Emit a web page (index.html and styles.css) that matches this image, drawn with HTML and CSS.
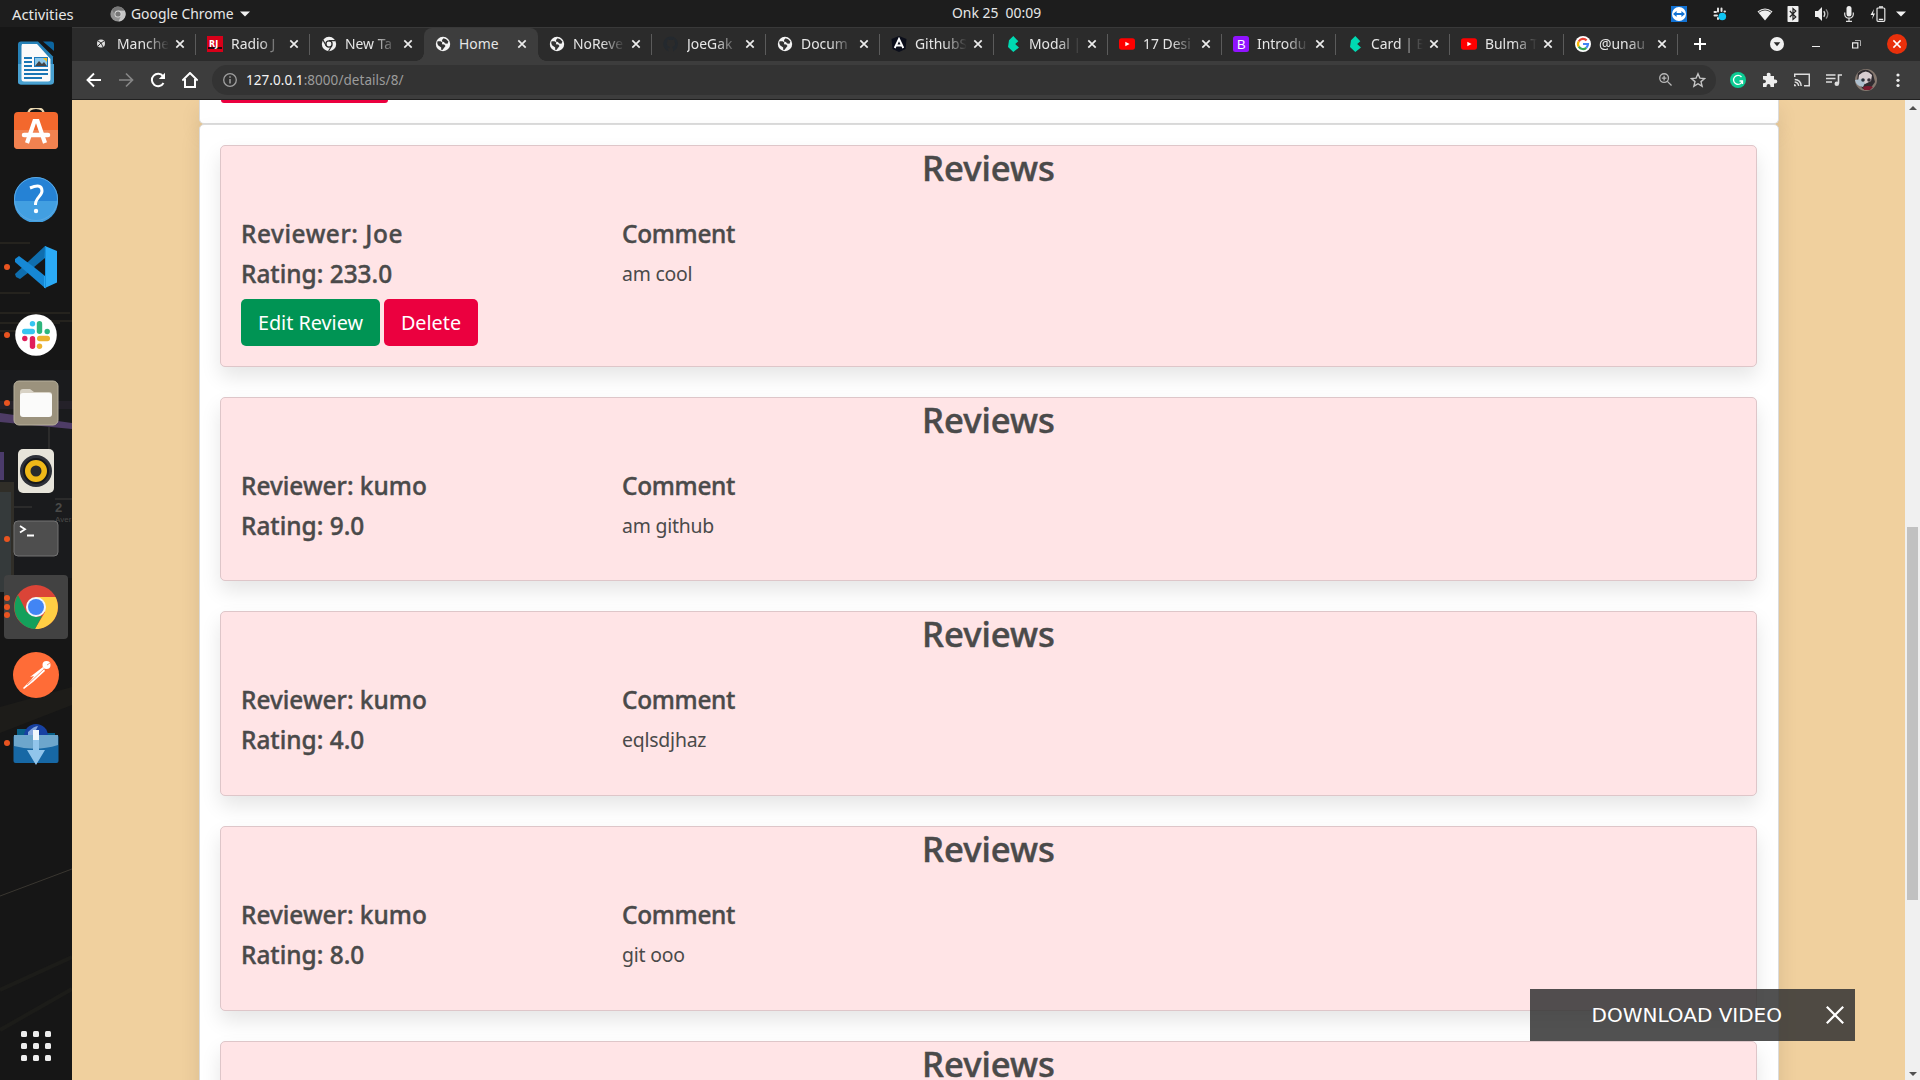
FILE: index.html
```html
<!DOCTYPE html>
<html lang="en">
<head>
<meta charset="utf-8">
<title>Home</title>
<link rel="stylesheet" href="styles.css">
</head>
<body>
<svg class="sprites" aria-hidden="true">
  <symbol id="globe" viewBox="0 0 16 16"><circle cx="8" cy="8" r="7.200" fill="#f4f4f4"/><path d="M2.600 5.200l3 .1 1.700 1.300-.4 1.600 2.400.2 1.200 1.500-1.600 2.200-1.500 1.900-1.300-.2.1-2.300L3 9.200 2.200 7zM8.600 2.300l2.600.9 2.200 2.400-.9 2.100-2.300-.3-1.300-1.500-2-.4.3-1.700z" fill="#343434"/></symbol>
  <symbol id="chromium" viewBox="0 0 16 16"><circle cx="8" cy="8" r="7.200" fill="#f1f1f1"/><circle cx="8" cy="8" r="3.100" fill="#f1f1f1" stroke="#2b2b2b" stroke-width="1.300"/><path d="M8 4.700h6.500M5.200 9.700L2 4M10.800 9.700L7.600 15" stroke="#2b2b2b" stroke-width="1.200"/></symbol>
  <symbol id="bulma" viewBox="0 0 16 16"><path d="M3 11l1-6.800L8.300 0l5 5.200L10.200 8l3.800 3.600L8.300 16z" fill="#00d9b2"/></symbol>
  <symbol id="youtube" viewBox="0 0 16 16"><rect y="2.300" width="16" height="11.400" rx="2.600" fill="#f00"/><path d="M6.300 5.700L10.600 8l-4.300 2.300z" fill="#fff"/></symbol>
  <symbol id="close" viewBox="0 0 10 10"><path d="M1.300 1.300l7.400 7.400M8.700 1.300L1.300 8.700" stroke="#ececec" stroke-width="1.700" fill="none"/></symbol>
  <symbol id="slack" viewBox="0 0 28 28"><g stroke-width="5.400" stroke-linecap="round"><path d="M2.700 10.500h7.600" stroke="#36c5f0"/><path d="M10.500 2.800v.01" stroke="#36c5f0"/><path d="M17.500 2.700v7.600" stroke="#2eb67d"/><path d="M25.200 10.500h.01" stroke="#2eb67d"/><path d="M17.700 17.500h7.600" stroke="#ecb22e"/><path d="M17.500 25.200h.01" stroke="#ecb22e"/><path d="M10.500 17.700v7.600" stroke="#e01e5a"/><path d="M2.800 17.500h.01" stroke="#e01e5a"/></g></symbol>
</svg>

<header class="topbar">
  <div class="topbar-left">
    <span class="activities">Activities</span>
    <svg class="app-icon" viewBox="0 0 16 16"><circle cx="8" cy="8" r="7.600" fill="#929292"/><path d="M8 4.500h6.800A7.600 7.600 0 0 1 8.500 15.600L11 9.800z" fill="#c6c6c6"/><path d="M2 3.500A7.600 7.600 0 0 1 14.600 4.500H8L5 9z" fill="#777"/><circle cx="8" cy="8" r="3.500" fill="#ddd"/><circle cx="8" cy="8" r="2.600" fill="#777"/></svg>
    <span class="app-name">Google Chrome</span>
    <svg class="caret" viewBox="0 0 10 6"><path d="M0 .5h10L5 5.500z" fill="#f2f2f2"/></svg>
  </div>
  <span class="clock">Onk 25&nbsp; 00:09</span>
  <div class="tray">
    <svg width="16" height="16" viewBox="0 0 16 16"><rect width="16" height="16" fill="#1272d3"/><circle cx="8" cy="8" r="7" fill="#fff"/><path d="M2 8l3.600-3v2h4.800V5L14 8l-3.600 3V9H5.600v2z" fill="#1272d3"/></svg>
    <svg class="tray-slack" width="16" height="16" viewBox="0 0 16 16"><path d="M6 2.500v3M2.500 6H4M9.500 2.500V5M12.500 5.500h.5M2.500 9.500H5M6 12v1" stroke="#e4e4e4" stroke-width="2" stroke-linecap="round"/><circle cx="10.300" cy="10.500" r="3.800" fill="#10c6f5"/></svg>
    <svg class="tray-wifi" width="16" height="16" viewBox="0 0 16 16"><path d="M.5 5.500Q8-.5 15.500 5.500L8 14.500z" fill="#eee"/><path d="M1.800 6.300Q8 1.700 14.200 6.300" stroke="#1d1d1d" stroke-width=".8" fill="none"/></svg>
    <svg width="12" height="16" viewBox="0 0 12 16"><rect x=".5" width="11" height="16" rx=".8" fill="#eee"/><path d="M2.800 5l6 6L6 13.500v-11L8.800 5l-6 6" fill="none" stroke="#222" stroke-width="1.200"/></svg>
    <svg class="tray-volume" width="16" height="16" viewBox="0 0 16 16"><path d="M1 5h3l4-4v14l-4-4H1z" fill="#eee"/><path d="M9.800 5.200q2 2.800 0 5.600" stroke="#ddd" stroke-width="1.300" fill="none"/><path d="M12 3.300q3.600 4.700 0 9.400" stroke="#888" stroke-width="1.300" fill="none"/></svg>
    <svg class="tray-mic" width="10" height="16" viewBox="0 0 10 16"><rect x="2.500" width="5" height="10.500" rx="2.500" fill="#eee"/><path d="M.7 6.500v2Q1 12 5 12.200 9 12 9.300 8.500v-2M5 12v3M2 15.300h6" stroke="#ddd" stroke-width="1.200" fill="none"/></svg>
    <svg class="tray-battery" width="16" height="16" viewBox="0 0 16 16"><path d="M4 3L.5 9H3l-1 4.500L5 7.500H3z" fill="#eee"/><rect x="7" y="2" width="7.800" height="13.300" rx="1" fill="none" stroke="#e5e5e5" stroke-width="1.200"/><path d="M9 1h4M8.800 13.300h4.400" stroke="#eee" stroke-width="1.300"/></svg>
    <svg class="caret" viewBox="0 0 10 6"><path d="M0 .5h10L5 5.500z" fill="#f2f2f2"/></svg>
  </div>
</header>

<div class="desktop">
  <nav class="dock">
    <svg class="wallpaper" viewBox="0 0 72 1053" preserveAspectRatio="none">
      <g fill="none"><path d="M0 216h30M0 266h30M0 286h70M0 296h60M35 294h37M0 304h20" stroke="#4b4432" stroke-opacity=".6"/><path d="M0 869l72-27" stroke="#3a3731"/><path d="M0 963l72-33M0 1003l72-41" stroke="#1c1c19" stroke-width="4"/></g>
      <path d="M0 343h72v208H0z" fill="#1a1b1d"/><path d="M0 374h72v8H0z" fill="#242129"/><path d="M0 386l72 10v6L0 395z" fill="#4e3c66"/><path d="M0 425h4v28H0z" fill="#4b3b6b"/><path d="M0 455h14v100H0z" fill="#302e28"/><path d="M0 465h11v100H0z" fill="#353a3b"/><path d="M49 400v50M14 480h18M55 472h17" stroke="#3c3c3b"/>
      <path d="M0 680l72-20v18L0 706z" fill="#1d1c19"/>
      <text x="55" y="485" class="wall-number">2</text><text x="55" y="495" class="wall-label">Aver</text>
    </svg>
    <a class="dock-item"><svg width="44" height="44" viewBox="0 0 44 44"><path d="M7 .5h17l15 15v25q0 3-3 3H7q-3 0-3-3v-37q0-3 3-3z" fill="#2681b7"/><path d="M4 23h36v17.500q0 3-3 3H7q-3 0-3-3z" fill="#49a1d1"/><path d="M29 .5h8q3 0 3 3V10z" fill="#0c659f"/><path d="M8 3h15l13.500 15v20q0 2.500-2.500 2.500H10Q7.500 40.500 7.500 38V5z" fill="#fafafa"/><path d="M10 17h8M10 21h8M10 25h8M10 29h24M10 33h24M10 37h18" stroke="#1976b5" stroke-width="2"/><rect x="20" y="16" width="14" height="10" fill="#1d7abd"/><path d="M21 17h12v8H21z" fill="#8bc7e8"/><path d="M21 25l4-5 3 3 2-2 3 4z" fill="#444"/><path d="M29 17h4v4z" fill="#f4bb1b"/></svg></a>
    <a class="dock-item"><svg width="46" height="46" viewBox="0 0 46 46"><path d="M15 7q0-7 8-7t8 7" stroke="#ead7b0" stroke-width="2" fill="none"/><rect x="1" y="4" width="44" height="37" rx="4" fill="#f3682d"/><path d="M1 22h44v15q0 4-4 4H5q-4 0-4-4z" fill="#f18250"/><path d="M14 35l7.500-22h3L32 35" stroke="#fff" stroke-width="4.200" fill="none"/><path d="M11 27h24" stroke="#fff" stroke-width="4.500" stroke-linecap="round"/></svg></a>
    <a class="dock-item"><svg width="46" height="46" viewBox="0 0 46 46"><circle cx="23" cy="23" r="22" fill="#2582d5"/><path d="M1 25h44a22 22 0 0 1-44 0z" fill="#429fe1"/><circle cx="23" cy="23" r="21.500" fill="none" stroke="#5ba9e3"/><path d="M17 12q12-5 12 3c0 5-7 7-6.500 14" stroke="#fff" stroke-width="3" fill="none"/><circle cx="23" cy="35" r="2.200" fill="#fff"/></svg></a>
    <a class="dock-item"><i class="dot"></i><svg width="44" height="44" viewBox="0 0 44 44"><path d="M31 1L1 29l1 3 4 2 26-20z" fill="#0f6eae"/><path d="M1 14l4-3 27 20-1 12L1 17z" fill="#1688d5"/><path d="M31 1l-1 42 2-.5 11-5V6z" fill="#2baaf5"/><path d="M31 1v13L20 22l11 9v12l1 .5V1z" fill="#1691df"/><path d="M31 13v18l-11-9z" fill="#151719"/></svg></a>
    <a class="dock-item"><i class="dot"></i><svg width="44" height="44" viewBox="0 0 44 44"><circle cx="22" cy="22" r="20.800" fill="#fff"/><use href="#slack" x="8" y="8" width="28" height="28"/></svg></a>
    <a class="dock-item"><i class="dot"></i><svg width="46" height="46" viewBox="0 0 46 46"><rect x="1" y="1" width="44" height="44" rx="5" fill="#9b927d" stroke="#b7b09d"/><path d="M7 12q0-3 3-3h7l4 3h15q3 0 3 3v18H7z" fill="#d8d2c5"/><rect x="7" y="13" width="32" height="24" rx="3" fill="#fbfbfa"/></svg></a>
    <a class="dock-item"><svg width="46" height="46" viewBox="0 0 46 46"><rect x="5" y="1" width="36" height="44" rx="5" fill="#e7e4da"/><circle cx="23" cy="23" r="16" fill="#2d3038"/><circle cx="23" cy="23" r="12" fill="#efb818" stroke="#17191d" stroke-width="2"/><circle cx="23" cy="23" r="5.500" fill="#292a2c"/></svg></a>
    <a class="dock-item"><i class="dot"></i><svg width="46" height="38" viewBox="0 0 46 38"><rect x="1" y="1" width="44" height="35" rx="4" fill="#4e4e4e" stroke="#737373"/><path d="M7 6l5 3.200-5 3.200M14 15.500h7" stroke="#fff" stroke-width="1.800" fill="none"/></svg></a>
    <a class="dock-item active"><span class="dots"><i></i><i></i><i></i></span><svg width="46" height="46" viewBox="0 0 46 46"><circle cx="23" cy="23" r="22" fill="#db4437"/><path d="M23 13h19.500A22 22 0 0 1 22 45L32 28z" fill="#ffce44"/><path d="M13.500 28l9.500 5 6-1-7 13A22 22 0 0 1 5 11z" fill="#14a05b"/><circle cx="23" cy="23" r="10" fill="#f1f5fb"/><circle cx="23" cy="23" r="8" fill="#4285f4"/></svg></a>
    <a class="dock-item"><svg width="48" height="48" viewBox="0 0 48 48"><circle cx="24" cy="24" r="23" fill="#ff6c37"/><circle cx="34.500" cy="14" r="4" fill="#fff"/><path d="M31 16L18 26l4-1-3 4-8 8 1 1 9-7 12-11z" fill="#fff"/><path d="M32 18L15 34M35 14l3-2" stroke="#ff6c37" stroke-width=".7"/></svg></a>
    <a class="dock-item downloader"><i class="dot"></i><svg width="46" height="42" viewBox="0 0 46 42"><path d="M4 5h9l3 4h26v12H4z" fill="#075f87"/><circle cx="23" cy="12" r="12" fill="#1741a2"/><path d="M15 8q6-6 10-6l-4 8 8 2-2 4-12-1z" fill="#87a9df"/><rect x=".5" y="11" width="45" height="28" rx="2" fill="#1768a5"/><path d="M1 11h44v10Q23 28 1 22z" fill="#6da6cc"/><path d="M20 6h6v20h6l-9 15-9-15h6z" fill="#91c5eb"/><path d="M20 6h6v10h-6z" fill="#f2f8fc"/></svg></a>
    <a class="apps"><i></i><i></i><i></i><i></i><i></i><i></i><i></i><i></i><i></i></a>
  </nav>

  <section class="browser">
    <div class="tabstrip">
      <div class="tab"><svg class="fav" viewBox="0 0 16 16"><circle cx="8" cy="7.500" r="4" fill="#ddd"/><path d="M5 5l3 2 3-2M5 10l3-3 2 4" stroke="#333" fill="none"/></svg><span class="label">Manche</span><svg class="x"><use href="#close"/></svg></div>
      <div class="tab"><svg class="fav" viewBox="0 0 16 16"><rect width="16" height="16" fill="#d80019"/><path d="M1 11h14v2H1z" fill="#24070b"/><text x="2" y="10.500" class="rj">RJ</text></svg><span class="label">Radio J</span><svg class="x"><use href="#close"/></svg></div>
      <div class="tab no-line"><svg class="fav"><use href="#chromium"/></svg><span class="label">New Ta</span><svg class="x"><use href="#close"/></svg></div>
      <div class="tab current"><svg class="fav"><use href="#globe"/></svg><span class="label">Home</span><svg class="x"><use href="#close"/></svg></div>
      <div class="tab"><svg class="fav"><use href="#globe"/></svg><span class="label">NoReve</span><svg class="x"><use href="#close"/></svg></div>
      <div class="tab"><svg class="fav" viewBox="0 0 16 16"><path d="M6 15.500C-1 13-1.500 5 4 1.500c8-4 15 6 8 12.500l-2 1.500v-3l-1-1.500c3-.5 4-3 2.500-5.500V3L9.500 4h-3l-2-1v2C3 8 4 10.500 7 11l-1 1.500-2-1" fill="#24292e"/></svg><span class="label">JoeGak</span><svg class="x"><use href="#close"/></svg></div>
      <div class="tab"><svg class="fav"><use href="#globe"/></svg><span class="label">Docum</span><svg class="x"><use href="#close"/></svg></div>
      <div class="tab"><svg class="fav" viewBox="0 0 16 16"><path d="M8 0l7.500 3-1 10L8 16l-6.500-3L.5 3z" fill="#0b0e1a"/><path d="M3.700 12L8 3l4.300 9M5.500 9.500h5" fill="none" stroke="#fff" stroke-width="1.900"/></svg><span class="label">GithubS</span><svg class="x"><use href="#close"/></svg></div>
      <div class="tab"><svg class="fav"><use href="#bulma"/></svg><span class="label">Modal |</span><svg class="x"><use href="#close"/></svg></div>
      <div class="tab"><svg class="fav"><use href="#youtube"/></svg><span class="label">17 Desi</span><svg class="x"><use href="#close"/></svg></div>
      <div class="tab"><svg class="fav" viewBox="0 0 16 16"><rect width="16" height="16" rx="2.500" fill="#9013fe"/><text x="4" y="13" class="bs">B</text></svg><span class="label">Introdu</span><svg class="x"><use href="#close"/></svg></div>
      <div class="tab"><svg class="fav"><use href="#bulma"/></svg><span class="label">Card | B</span><svg class="x"><use href="#close"/></svg></div>
      <div class="tab"><svg class="fav"><use href="#youtube"/></svg><span class="label">Bulma T</span><svg class="x"><use href="#close"/></svg></div>
      <div class="tab"><svg class="fav" viewBox="0 0 16 16"><circle cx="8" cy="8" r="8" fill="#fff"/><g fill="none" stroke-width="2.200"><path d="M11.600 4.400A5 5 0 0 0 3.800 5.300" stroke="#ea4335"/><path d="M3.800 5.300a5 5 0 0 0 0 5.400" stroke="#fbbc05"/><path d="M3.800 10.700A5 5 0 0 0 11.300 11.800" stroke="#34a853"/><path d="M11.300 11.800Q13 10 13 8H8" stroke="#4285f4"/></g></svg><span class="label">@unau</span><svg class="x"><use href="#close"/></svg></div>
      <svg class="new-tab" viewBox="0 0 12 12"><path d="M6 0v12M0 6h12" stroke="#fff" stroke-width="2"/></svg>
      <div class="window-controls">
        <svg width="14" height="14" viewBox="0 0 14 14"><circle cx="7" cy="7" r="7" fill="#f1f1f1"/><path d="M3.700 5.300h6.600L7 9.300z" fill="#292929"/></svg>
        <svg width="8" height="8" viewBox="0 0 8 8"><path d="M0 6.500h8" stroke="#eee"/></svg>
        <svg width="9" height="9" viewBox="0 0 9 9"><path d="M.6 2.800h5.200V8H.6z" stroke="#eee" stroke-width="1.200" fill="none"/><path d="M3 .5h5.500V6" stroke="#aaa" fill="none"/></svg>
        <svg width="20" height="20" viewBox="0 0 20 20"><circle cx="10" cy="10" r="10" fill="#e9300b"/><path d="M6.400 6.400l7.200 7.200M13.600 6.400l-7.200 7.200" stroke="#fff" stroke-width="1.500"/></svg>
      </div>
    </div>

    <div class="toolbar">
      <div class="nav-buttons">
        <svg viewBox="0 0 16 16"><path d="M15 8H2M8 1.500L1.500 8 8 14.500" stroke="#fff" stroke-width="1.900" fill="none"/></svg>
        <svg viewBox="0 0 16 16"><path d="M1 8h13M8 1.500L14.500 8 8 14.500" stroke="#868686" stroke-width="1.700" fill="none"/></svg>
        <svg viewBox="0 0 16 16"><path d="M13.500 11A6.200 6.200 0 1 1 13 4.200" stroke="#fff" stroke-width="2" fill="none"/><path d="M15 .8V7H8.800z" fill="#fff"/></svg>
        <svg viewBox="0 0 16 16"><path d="M.3 8.500L8 1l7.700 7.500M3 7v8h10V7" stroke="#fff" stroke-width="2" fill="none"/></svg>
      </div>
      <div class="address">
        <svg class="info" viewBox="0 0 14 14"><circle cx="7" cy="7" r="6.300" stroke="#a0a0a0" stroke-width="1.300" fill="none"/><path d="M7 6v4.500M7 3.300v1.500" stroke="#a0a0a0" stroke-width="1.500"/></svg>
        <span class="url"><b>127.0.0.1</b>:8000/details/8/</span>
        <svg class="zoom-icon" viewBox="0 0 14 14"><circle cx="5.500" cy="5.500" r="4.700" stroke="#b9b9b9" stroke-width="1.400" fill="none"/><path d="M9 9l4.500 4.500M3 5.500h5M5.500 3v5" stroke="#b9b9b9" stroke-width="1.400"/></svg>
        <svg class="star" viewBox="0 0 16 16"><path d="M8 1.800l1.900 4.300 4.700.4-3.600 3.100 1.100 4.600L8 11.700l-4.100 2.500L5 9.600 1.400 6.500l4.700-.4z" stroke="#c5c5c5" stroke-width="1.400" fill="none"/></svg>
      </div>
      <div class="extensions">
        <svg viewBox="0 0 16 16"><circle cx="8" cy="8" r="8" fill="#0ccb93"/><path d="M11.500 5A4.500 4.500 0 1 0 12.400 9H9.500m3 0v3" stroke="#fff" stroke-width="1.300" fill="none"/></svg>
        <svg viewBox="0 0 16 16"><path d="M1 4h4Q4 .8 6.600.8T8.500 4H12v3.500q3.300-.5 3.300 2T12 11.500V15H8.500q0-3-2-3t-2 3H1v-3.800q3 .2 3-1.800T1 7.500z" fill="#eee"/></svg>
        <svg viewBox="0 0 16 16"><path d="M.7 5V2.300h14.600v11.500H10M.7 7.500q6 .3 6.500 6.500M.7 10q3.500.3 4 4" stroke="#ddd" stroke-width="1.500" fill="none"/><path d="M0 12q2 0 2.300 2.300H0z" fill="#ddd"/></svg>
        <svg viewBox="0 0 16 16"><path d="M0 3h9.500M0 6.500h9.500M0 10h6M12.500 11.500V3H16" stroke="#ddd" stroke-width="1.600" fill="none"/><circle cx="10.800" cy="11.800" r="2.300" fill="#ddd"/></svg>
        <svg class="avatar" viewBox="0 0 22 22"><circle cx="11" cy="11" r="11" fill="#85786f"/><path d="M3 4Q11-3 18 5l2 8-5 7H8L2 13z" fill="#302c30"/><path d="M4 6q7-7 13 0l-1 6-6 3-7-2z" fill="#d8cdd0"/><path d="M0 11l6-1 4 4-2 4q-7-1-8-7z" fill="#aec0ce"/><circle cx="8" cy="11" r="1.800" fill="#283039"/><circle cx="14" cy="11" r="1.800" fill="#39323b"/><path d="M8 18q5-2 10 0l-3 3H9z" fill="#7e1b30"/></svg>
        <svg viewBox="0 0 16 16"><g fill="#eee"><circle cx="8" cy="3" r="1.600"/><circle cx="8" cy="8.300" r="1.600"/><circle cx="8" cy="13.500" r="1.600"/></g></svg>
      </div>
    </div>

    <div class="viewport">
      <main class="page">
        <section class="panel panel-top"><span class="btn btn-danger cut"></span></section>
        <section class="panel panel-reviews">
          <article class="review tall">
            <h3>Reviews</h3>
            <div class="review-body">
              <div><h5 class="wide">Reviewer: Joe</h5><h5>Rating: 233.0</h5><div class="actions"><a class="btn btn-success">Edit Review</a><a class="btn btn-danger">Delete</a></div></div>
              <div><h5 class="comment">Comment</h5><p>am cool</p></div>
            </div>
          </article>
          <article class="review">
            <h3>Reviews</h3>
            <div class="review-body">
              <div><h5>Reviewer: kumo</h5><h5>Rating: 9.0</h5></div>
              <div><h5 class="comment">Comment</h5><p>am github</p></div>
            </div>
          </article>
          <article class="review">
            <h3>Reviews</h3>
            <div class="review-body">
              <div><h5>Reviewer: kumo</h5><h5>Rating: 4.0</h5></div>
              <div><h5 class="comment">Comment</h5><p>eqlsdjhaz</p></div>
            </div>
          </article>
          <article class="review">
            <h3>Reviews</h3>
            <div class="review-body">
              <div><h5>Reviewer: kumo</h5><h5>Rating: 8.0</h5></div>
              <div><h5 class="comment">Comment</h5><p>git ooo</p></div>
            </div>
          </article>
          <article class="review">
            <h3>Reviews</h3>
            <div class="review-body"></div>
          </article>
        </section>
      </main>
      <div class="scrollbar">
        <svg viewBox="0 0 8 4"><path d="M0 4h8L4 0z" fill="#505050"/></svg>
        <div class="track"><div class="thumb"></div></div>
        <svg viewBox="0 0 8 4"><path d="M0 0h8L4 4z" fill="#505050"/></svg>
      </div>
    </div>
  </section>
</div>
<div class="download"><span>DOWNLOAD VIDEO</span><svg viewBox="0 0 18 18"><path d="M.8.8l16.400 16.400M17.200.8L.8 17.200" stroke="#fff" stroke-width="2.200"/></svg></div>
</body>
</html>
```
FILE: styles.css
```css
* { box-sizing: border-box; }
body {
  margin: 0;
  width: 1920px;
  height: 1080px;
  overflow: hidden;
  display: flex;
  flex-direction: column;
  font-family: "Noto Sans", "Open Sans", sans-serif;
  background: #171717;
}
svg { display: block; flex: none; }
.sprites { position: absolute; width: 0; height: 0; }

/* system bar */
.topbar {
  height: 27px;
  flex: none;
  display: grid;
  grid-template-columns: 952px 90px 1fr;
  align-items: center;
  background: #1d1d1d;
  color: #e8e8e8;
  font-size: 13.900px;
  line-height: 26px;
}
.topbar-left { display: flex; align-items: center; padding-left: 12px; }
.activities { width: 98px; font-size: 14.800px; }
.app-icon { width: 16px; height: 16px; margin-right: 5px; }
.app-name { width: 109px; white-space: nowrap; }
.caret { width: 10px; height: 6px; }
.clock { white-space: nowrap; padding-bottom: 1px; }
.tray { display: flex; align-items: center; justify-content: flex-end; padding-right: 15px; }
.tray-slack { margin-left: 25px; }
.tray-wifi { margin: 0 14px 0 29px; }
.tray-volume { margin-left: 15px; }
.tray-mic { margin: 0 16px 0 14px; }
.tray-battery { margin-right: 10px; }
.tray > svg:first-child { margin-left: 0; }
.tray .caret { margin-right: -1px; }

.desktop { flex: 1; min-height: 0; display: flex; }

/* launcher */
.dock {
  position: relative;
  width: 72px;
  flex: none;
  padding-top: 2px;
  background: #161616;
  display: flex;
  flex-direction: column;
  align-items: center;
}
.wallpaper { position: absolute; inset: 0; width: 72px; height: 1053px; }
.wall-number { font: bold 13px "Liberation Sans", sans-serif; fill: #4a4a48; }
.wall-label { font: 8px "Liberation Sans", sans-serif; fill: #4a4a48; }
.dock-item { position: relative; width: 64px; height: 64px; margin: 2px 0; flex: none; display: grid; place-items: center; border-radius: 4px; }
.dock-item.active { background: #424242; }
.dock-item.downloader { padding-top: 4px; }
.dot, .dots i { width: 6px; height: 6px; border-radius: 50%; background: #e95420; }
.dot { position: absolute; left: 0; top: 29px; }
.dots { position: absolute; left: 0; top: 20px; display: grid; gap: 2.700px; }
.apps { position: relative; margin-top: auto; margin-bottom: 19px; display: grid; grid-template-columns: repeat(3, 6px); gap: 6px; }
.apps i { width: 6px; height: 6px; border-radius: 1.500px; background: #eee; }

/* browser chrome */
.browser { flex: 1; min-width: 0; display: flex; flex-direction: column; }
.tabstrip { height: 34px; flex: none; display: flex; align-items: center; padding-left: 10px; background: #2b2b2b; border-top: 1px solid #393939; }
.tab { width: 114px; height: 33px; flex: none; display: flex; align-items: center; padding: 0 0 1px 11px; position: relative; }
.tab::after { content: ""; position: absolute; right: 0; top: 6px; width: 1px; height: 21px; background: #5b5b5b; }
.tab.no-line::after, .tab.current::after { display: none; }
.tab.current { background: #3d3d3d; border-radius: 8px 8px 0 0; }
.tab.current::before { content: ""; position: absolute; left: -8px; right: -8px; bottom: 0; height: 8px; background: radial-gradient(circle at 0 0, transparent 7.500px, #3d3d3d 8px) 0 0 / 8px 8px no-repeat, radial-gradient(circle at 100% 0, transparent 7.500px, #3d3d3d 8px) 100% 0 / 8px 8px no-repeat; }
.fav { width: 16px; height: 16px; margin-right: 8px; }
.label { width: 52px; overflow: hidden; white-space: nowrap; color: #e6e6e6; font-size: 13.900px; line-height: 24px; -webkit-mask-image: linear-gradient(90deg, #000 55%, transparent 100%); mask-image: linear-gradient(90deg, #000 55%, transparent 100%); }
.current .label { -webkit-mask-image: none; mask-image: none; }
.x { width: 10px; height: 10px; margin-left: 6px; }
.rj { font: bold 8px "DejaVu Sans", sans-serif; fill: #fff; }
.bs { font: 13px "Liberation Sans", sans-serif; fill: #fff; }
.new-tab { width: 12px; height: 12px; margin-left: 16px; margin-bottom: 1px; }
.window-controls { flex: 1; display: flex; align-items: center; justify-content: flex-end; padding: 0 13px 1px 0; }
.window-controls svg:nth-child(2) { margin: 0 32px 0 28px; }
.window-controls svg:nth-child(4) { margin-left: 26px; }

.toolbar { height: 39px; flex: none; display: flex; align-items: center; padding-bottom: 1px; background: #3d3d3d; border-bottom: 1px solid #202020; }
.nav-buttons { width: 140px; display: flex; gap: 16px; padding-left: 14px; }
.nav-buttons svg { width: 16px; height: 16px; }
.address { height: 30px; flex: 1; display: flex; align-items: center; padding: 0 10px 0 11px; border-radius: 15px; background: #333; }
.address .info { width: 14px; height: 14px; margin-right: 9px; }
.url { flex: 1; font-size: 13.500px; letter-spacing: .050px; color: #9c9c9c; }
.url b { font-weight: 400; color: #f4f4f4; }
.zoom-icon { width: 13px; height: 13px; margin-right: 18px; }
.star { width: 16px; height: 16px; }
.extensions { width: 204px; display: flex; align-items: center; gap: 16px; padding-left: 14px; }
.extensions svg { width: 16px; height: 16px; }
.extensions .avatar { width: 22px; height: 22px; margin: 0 -3px; }

/* page */
.viewport { flex: 1; min-height: 0; display: flex; background: #f0d09e; overflow: hidden; }
.page { width: 1833px; padding: 0 126px 0 127px; color: #4a4a4a; }
.panel { background: #fff; border: 1px solid #dbdbdb; border-radius: 5px; box-shadow: 0 10px 20px rgba(0,0,0,.1); }
.panel-top { height: 24px; padding-left: 21px; border-top: 0; border-radius: 0 0 5px 5px; }
.panel-reviews { padding: 20px 21px 20px 20px; height: 1200px; }
.review { height: 184.670px; margin-bottom: 30px; background: #ffe4e6; border: 1px solid #dec6c9; border-radius: 5px; box-shadow: 0 10px 20px rgba(0,0,0,.1); }
.review.tall { height: 221.700px; }
.review h3 { margin: 0 0 10px; text-align: center; font-size: 34.700px; line-height: 43.500px; height: 42px; font-weight: 500; -webkit-text-stroke: .5px #4a4a4a; }
.review-body { padding: 20px; display: grid; grid-template-columns: 381px 1fr; }
.review h5 { margin: 0 0 10px; font-size: 24.400px; line-height: 31px; height: 30px; font-weight: 500; -webkit-text-stroke: .4px #4a4a4a; }
.review .comment { letter-spacing: -.300px; }
.review .wide { letter-spacing: .550px; }
.review p { margin: 0; font-size: 19.400px; line-height: 31.500px; letter-spacing: -.200px; }
.actions { display: flex; gap: 4px; margin-top: 11px; }
.btn { display: flex; align-items: center; justify-content: center; height: 47px; padding-bottom: 1px; border-radius: 5px; color: #fff; font-size: 19.800px; }
.btn-success { width: 139px; background: #009454; }
.btn-danger { width: 94px; background: #eb003f; }
.btn.cut { width: 167px; height: 3px; border-radius: 0 0 5px 5px; }

.scrollbar { width: 15px; background: #f0f0f0; display: flex; flex-direction: column; align-items: center; padding: 6px 0 4px; }
.scrollbar svg { width: 8px; height: 4px; }
.track { flex: 1; width: 11px; padding-top: 417px; }
.thumb { height: 373px; background: #c1c1c1; }

.download { position: absolute; left: 1530px; top: 989px; width: 325px; height: 52px; background: rgba(50,50,50,.85); display: flex; align-items: center; justify-content: flex-end; gap: 44px; padding-right: 11px; color: #fff; font: 20px "DejaVu Sans", sans-serif; }
.download svg { width: 18px; height: 18px; }
```
